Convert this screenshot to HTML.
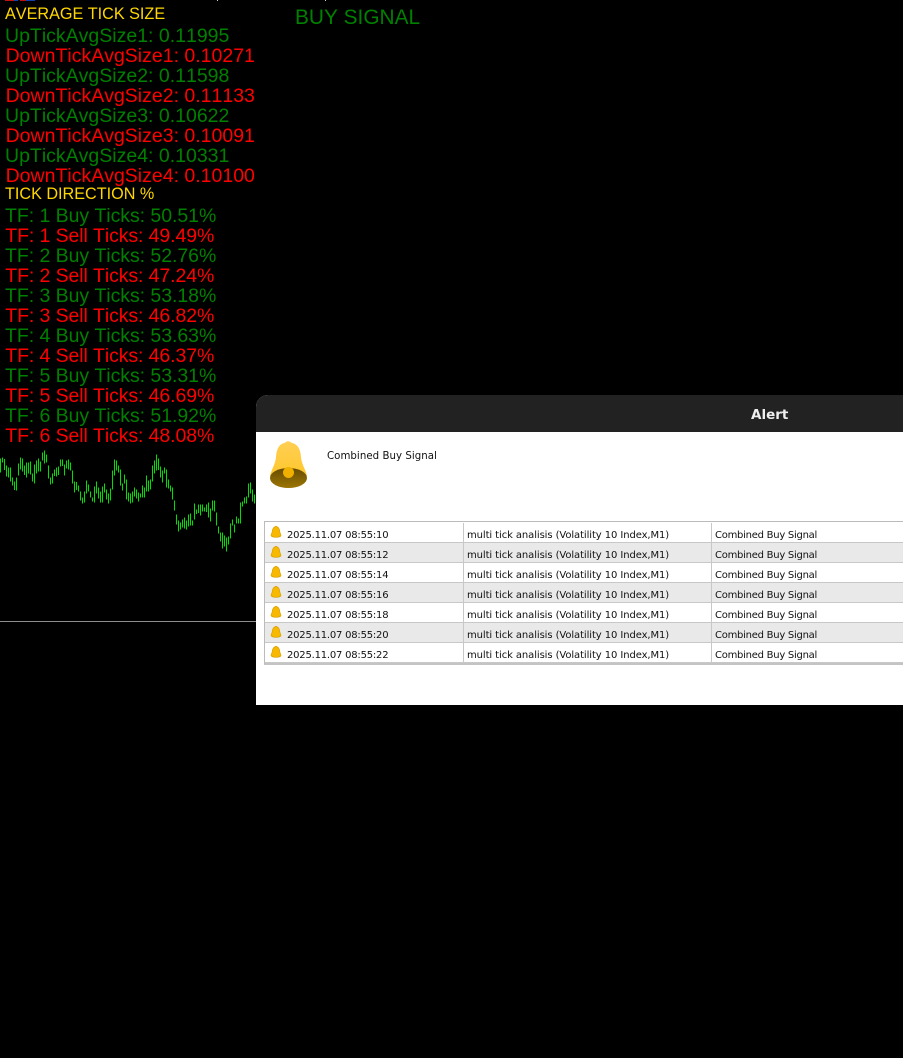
<!DOCTYPE html>
<html><head><meta charset="utf-8"><style>
html,body{margin:0;padding:0;width:903px;height:1058px;background:#000;overflow:hidden}
.t{position:absolute;white-space:nowrap;font-family:"Liberation Sans",Arial,sans-serif;line-height:20px;font-kerning:none}
.g{color:#008000;font-size:19.5px;left:5px}
.r{color:#ff0000;font-size:19.5px;left:5.600px}
.f.g{letter-spacing:-.05px}
.f.r{letter-spacing:-.1px;left:5.300px}
.y{color:#ffd700;font-size:16.200px;left:5px}
.d{position:absolute;font-family:"DejaVu Sans",sans-serif;white-space:nowrap;color:#111}
.row{position:absolute;left:265px;width:638px;height:20px;box-sizing:border-box;border-bottom:1px solid #c8c8c8;font-size:10px;line-height:20px}
.row.o{background:#e9e9e9}
.row span{position:absolute;top:2.600px;font-family:"DejaVu Sans",sans-serif;color:#111;white-space:nowrap}
.row span.a{left:22px;letter-spacing:-.21px}
.row span.b{left:202px;letter-spacing:-.093px}
.row span.c{left:450px;letter-spacing:-.26px}
.row i{position:absolute;top:0;bottom:-1px;width:1px;background:#c8c8c8}
.row svg{position:absolute;left:5px;top:2px}
</style></head><body>
<div style="position:absolute;left:5px;top:0;width:9px;height:1px;background:#c01010"></div>
<div style="position:absolute;left:14px;top:0;width:4px;height:1px;background:#1040b0"></div>
<div style="position:absolute;left:20px;top:0;width:6px;height:1px;background:#c01010"></div>
<div style="position:absolute;left:26px;top:0;width:9px;height:1px;background:#1040b0"></div>
<div style="position:absolute;left:217px;top:0;width:1px;height:1px;background:#ccc"></div>
<div style="position:absolute;left:325px;top:0;width:1px;height:1px;background:#ccc"></div>

<div class="t y" style="top:4px">AVERAGE TICK SIZE</div>
<div class="t g" style="top:26px">UpTickAvgSize1: 0.11995</div>
<div class="t r" style="top:46px">DownTickAvgSize1: 0.10271</div>
<div class="t g" style="top:66px">UpTickAvgSize2: 0.11598</div>
<div class="t r" style="top:86px">DownTickAvgSize2: 0.11133</div>
<div class="t g" style="top:106px">UpTickAvgSize3: 0.10622</div>
<div class="t r" style="top:126px">DownTickAvgSize3: 0.10091</div>
<div class="t g" style="top:146px">UpTickAvgSize4: 0.10331</div>
<div class="t r" style="top:166px">DownTickAvgSize4: 0.10100</div>
<div class="t y" style="top:184px">TICK DIRECTION %</div>
<div class="t g f" style="top:206px">TF: 1 Buy Ticks: 50.51%</div>
<div class="t r f" style="top:226px">TF: 1 Sell Ticks: 49.49%</div>
<div class="t g f" style="top:246px">TF: 2 Buy Ticks: 52.76%</div>
<div class="t r f" style="top:266px">TF: 2 Sell Ticks: 47.24%</div>
<div class="t g f" style="top:286px">TF: 3 Buy Ticks: 53.18%</div>
<div class="t r f" style="top:306px">TF: 3 Sell Ticks: 46.82%</div>
<div class="t g f" style="top:326px">TF: 4 Buy Ticks: 53.63%</div>
<div class="t r f" style="top:346px">TF: 4 Sell Ticks: 46.37%</div>
<div class="t g f" style="top:366px">TF: 5 Buy Ticks: 53.31%</div>
<div class="t r f" style="top:386px">TF: 5 Sell Ticks: 46.69%</div>
<div class="t g f" style="top:406px">TF: 6 Buy Ticks: 51.92%</div>
<div class="t r f" style="top:426px">TF: 6 Sell Ticks: 48.08%</div>
<div class="t" style="left:295px;top:8px;color:#008000;font-size:20.850px">BUY SIGNAL</div>

<svg style="position:absolute;left:0;top:440px" width="256" height="190" viewBox="0 0 768 570" shape-rendering="crispEdges">
<path fill="none" stroke="#00e000" stroke-width="3" d="M1.5 55V98M7.5 52V68M13.5 57V90M19.5 76V110M25.5 82V112M31.5 82V125M37.5 112V137M43.5 124V150M49.5 112V152M55.5 70V107M61.5 52V88M67.5 55V95M73.5 76V105M79.5 67V113M85.5 67V100M91.5 64V103M97.5 100V125M103.5 73V131M109.5 61V100M115.5 55V95M121.5 64V95M127.5 37V62M133.5 31V70M139.5 43V68M145.5 76V116M151.5 112V134M157.5 100V130M163.5 88V108M169.5 82V110M175.5 79V105M181.5 58V80M187.5 58V78M193.5 73V106M199.5 61V85M205.5 58V88M211.5 67V92M217.5 91V131M223.5 124V158M229.5 126V150M235.5 136V155M241.5 154V182M247.5 172V191M253.5 154V188M259.5 121V160M265.5 133V155M271.5 154V172M277.5 172V185M283.5 139V188M289.5 124V160M295.5 142V176M301.5 154V188M307.5 139V188M313.5 130V158M319.5 148V178M325.5 160V191M331.5 145V182M337.5 91V149M343.5 58V107M349.5 61V91M355.5 76V97M361.5 88V136M367.5 130V152M373.5 103V130M379.5 118V179M385.5 157V184M391.5 160V191M397.5 154V188M403.5 142V170M409.5 148V176M415.5 157V184M421.5 160V172M427.5 136V172M433.5 142V172M439.5 106V155M445.5 121V155M451.5 118V148M457.5 76V124M463.5 61V100M469.5 43V92M475.5 55V90M481.5 79V113M487.5 91V128M493.5 82V100M499.5 88V143M505.5 118V146M511.5 136V155M517.5 142V179M523.5 181V212M529.5 223V254M535.5 241V275M541.5 247V269M547.5 238V262M553.5 232V265M559.5 241V268M565.5 223V259M571.5 220V257M577.5 241V257M583.5 190V238M589.5 208V222M595.5 193V219M601.5 193V226M607.5 193V214M613.5 202V214M619.5 193V216M625.5 187V232M631.5 205V244M637.5 181V211M643.5 181V214M649.5 217V257M655.5 259V280M661.5 277V304M667.5 277V326M673.5 286V319M679.5 292V335M685.5 289V313M691.5 250V296M697.5 238V256M703.5 253V278M709.5 229V251M715.5 235V251M721.5 187V251M727.5 184V200M733.5 172V190M739.5 169V190M745.5 130V172M751.5 127V160M757.5 148V184M763.5 163V190"/>
</svg>
<div style="position:absolute;left:0;top:621px;width:256px;height:1px;background:#8c8c8c"></div>

<div style="position:absolute;left:256px;top:395px;width:647px;height:310px;background:#fff;border-radius:12px 0 0 0;overflow:hidden">
  <div style="position:absolute;left:0;top:0;width:647px;height:37px;background:#222"></div>
  <div style="position:absolute;left:495px;top:11px;font:bold 13.5px/18px 'DejaVu Sans',sans-serif;color:#eee">Alert</div>
</div>

<svg style="position:absolute;left:268px;top:440px" width="40" height="50" viewBox="0 0 40 50">
<defs><linearGradient id="b" x1="0" y1="0" x2="0" y2="1"><stop offset="0" stop-color="#ffcf55"/><stop offset="1" stop-color="#ffc72c"/></linearGradient>
<linearGradient id="c" x1="0" y1="0" x2="0" y2="1"><stop offset="0" stop-color="#674c00"/><stop offset="1" stop-color="#9c7504"/></linearGradient></defs>
<path fill="url(#b)" d="M16.500 3Q20-.5 24 3C29.500 4 32.500 9 33 17C33.800 25 37.500 29 39 36L2 36C3.500 29 7.200 25 8 17C8.500 9 11 4 16.500 3Z"/>
<ellipse cx="20.500" cy="38" rx="18.500" ry="10" fill="url(#c)"/>
<circle cx="20.500" cy="32.500" r="5.500" fill="#f0b000"/>
</svg>
<div class="d" style="left:327px;top:449px;font-size:10.2px;line-height:16px;letter-spacing:.05px">Combined Buy Signal</div>

<div style="position:absolute;left:264px;top:521px;width:639px;height:144px;box-sizing:border-box;border:1px solid #bbb;border-right:0;border-bottom:2px solid #c4c4c4"></div>

<div class="row" style="top:523px"><svg width="12" height="14" viewBox="0 0 12 14"><path fill="#f7b800" stroke="#d39a00" stroke-width=".6" d="M5 1.800Q6 .6 7 1.800C9 2.500 9.600 4.300 9.800 6.500C10 8.300 11 9.300 11 10.500Q10.500 12.300 6 12.300Q1.500 12.300 1 10.500C1 9.300 2 8.300 2.200 6.500C2.400 4.300 3 2.500 5 1.800Z"/></svg><span class="a">2025.11.07 08:55:10</span><i style="left:198px"></i><span class="b">multi tick analisis (Volatility 10 Index,M1)</span><i style="left:446px"></i><span class="c">Combined Buy Signal</span></div>
<div class="row o" style="top:543px"><svg width="12" height="14" viewBox="0 0 12 14"><path fill="#f7b800" stroke="#d39a00" stroke-width=".6" d="M5 1.800Q6 .6 7 1.800C9 2.500 9.600 4.300 9.800 6.500C10 8.300 11 9.300 11 10.500Q10.500 12.300 6 12.300Q1.500 12.300 1 10.500C1 9.300 2 8.300 2.200 6.500C2.400 4.300 3 2.500 5 1.800Z"/></svg><span class="a">2025.11.07 08:55:12</span><i style="left:198px"></i><span class="b">multi tick analisis (Volatility 10 Index,M1)</span><i style="left:446px"></i><span class="c">Combined Buy Signal</span></div>
<div class="row" style="top:563px"><svg width="12" height="14" viewBox="0 0 12 14"><path fill="#f7b800" stroke="#d39a00" stroke-width=".6" d="M5 1.800Q6 .6 7 1.800C9 2.500 9.600 4.300 9.800 6.500C10 8.300 11 9.300 11 10.500Q10.500 12.300 6 12.300Q1.500 12.300 1 10.500C1 9.300 2 8.300 2.200 6.500C2.400 4.300 3 2.500 5 1.800Z"/></svg><span class="a">2025.11.07 08:55:14</span><i style="left:198px"></i><span class="b">multi tick analisis (Volatility 10 Index,M1)</span><i style="left:446px"></i><span class="c">Combined Buy Signal</span></div>
<div class="row o" style="top:583px"><svg width="12" height="14" viewBox="0 0 12 14"><path fill="#f7b800" stroke="#d39a00" stroke-width=".6" d="M5 1.800Q6 .6 7 1.800C9 2.500 9.600 4.300 9.800 6.500C10 8.300 11 9.300 11 10.500Q10.500 12.300 6 12.300Q1.500 12.300 1 10.500C1 9.300 2 8.300 2.200 6.500C2.400 4.300 3 2.500 5 1.800Z"/></svg><span class="a">2025.11.07 08:55:16</span><i style="left:198px"></i><span class="b">multi tick analisis (Volatility 10 Index,M1)</span><i style="left:446px"></i><span class="c">Combined Buy Signal</span></div>
<div class="row" style="top:603px"><svg width="12" height="14" viewBox="0 0 12 14"><path fill="#f7b800" stroke="#d39a00" stroke-width=".6" d="M5 1.800Q6 .6 7 1.800C9 2.500 9.600 4.300 9.800 6.500C10 8.300 11 9.300 11 10.500Q10.500 12.300 6 12.300Q1.500 12.300 1 10.500C1 9.300 2 8.300 2.200 6.500C2.400 4.300 3 2.500 5 1.800Z"/></svg><span class="a">2025.11.07 08:55:18</span><i style="left:198px"></i><span class="b">multi tick analisis (Volatility 10 Index,M1)</span><i style="left:446px"></i><span class="c">Combined Buy Signal</span></div>
<div class="row o" style="top:623px"><svg width="12" height="14" viewBox="0 0 12 14"><path fill="#f7b800" stroke="#d39a00" stroke-width=".6" d="M5 1.800Q6 .6 7 1.800C9 2.500 9.600 4.300 9.800 6.500C10 8.300 11 9.300 11 10.500Q10.500 12.300 6 12.300Q1.500 12.300 1 10.500C1 9.300 2 8.300 2.200 6.500C2.400 4.300 3 2.500 5 1.800Z"/></svg><span class="a">2025.11.07 08:55:20</span><i style="left:198px"></i><span class="b">multi tick analisis (Volatility 10 Index,M1)</span><i style="left:446px"></i><span class="c">Combined Buy Signal</span></div>
<div class="row" style="top:643px"><svg width="12" height="14" viewBox="0 0 12 14"><path fill="#f7b800" stroke="#d39a00" stroke-width=".6" d="M5 1.800Q6 .6 7 1.800C9 2.500 9.600 4.300 9.800 6.500C10 8.300 11 9.300 11 10.500Q10.500 12.300 6 12.300Q1.500 12.300 1 10.500C1 9.300 2 8.300 2.200 6.500C2.400 4.300 3 2.500 5 1.800Z"/></svg><span class="a">2025.11.07 08:55:22</span><i style="left:198px"></i><span class="b">multi tick analisis (Volatility 10 Index,M1)</span><i style="left:446px"></i><span class="c">Combined Buy Signal</span></div>
</body></html>
